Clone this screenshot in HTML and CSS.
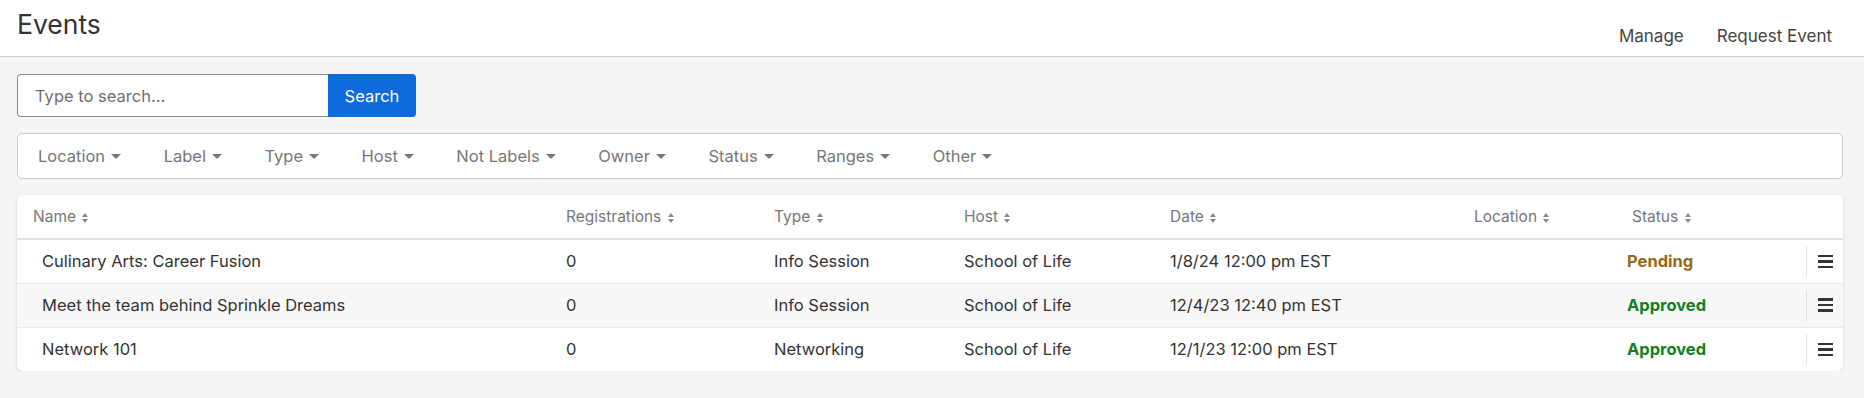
FILE: index.html
```html
<!DOCTYPE html>
<html lang="en">
<head>
  <meta charset="UTF-8" />
  <title>Events</title>
  <link rel="stylesheet" href="styles.css">
</head>
<body>

  <!-- Top bar -->
  <header class="topbar">
    <h1>Events</h1>
    <nav class="topnav">
      <a href="#">Manage</a>
      <a href="#">Request Event</a>
    </nav>
  </header>

  <main class="page">
    <!-- Search -->
    <form class="search">
      <input type="text" placeholder="Type to search..." />
      <button type="submit">Search</button>
    </form>

    <!-- Filters -->
    <div class="filters">
      <span class="filter">Location <i class="caret"></i></span>
      <span class="filter">Label <i class="caret"></i></span>
      <span class="filter">Type <i class="caret"></i></span>
      <span class="filter">Host <i class="caret"></i></span>
      <span class="filter">Not Labels <i class="caret"></i></span>
      <span class="filter">Owner <i class="caret"></i></span>
      <span class="filter">Status <i class="caret"></i></span>
      <span class="filter">Ranges <i class="caret"></i></span>
      <span class="filter">Other <i class="caret"></i></span>
    </div>

    <!-- Events table -->
    <div class="card">
      <table class="events">
        <colgroup>
          <col style="width: 533px">
          <col style="width: 208px">
          <col style="width: 190px">
          <col style="width: 206px">
          <col style="width: 304px">
          <col style="width: 158px">
          <col style="width: 190px">
          <col>
        </colgroup>
        <thead>
          <tr>
            <th>Name <span class="sort"></span></th>
            <th>Registrations <span class="sort"></span></th>
            <th>Type <span class="sort"></span></th>
            <th>Host <span class="sort"></span></th>
            <th>Date <span class="sort"></span></th>
            <th>Location <span class="sort"></span></th>
            <th>Status <span class="sort"></span></th>
            <th></th>
          </tr>
        </thead>
        <tbody>
          <tr>
            <td class="name">Culinary Arts: Career Fusion</td>
            <td>0</td>
            <td>Info Session</td>
            <td>School of Life</td>
            <td>1/8/24 12:00 pm EST</td>
            <td></td>
            <td class="status pending">Pending</td>
            <td class="actions"><span class="menu"><i></i><i></i><i></i></span></td>
          </tr>
          <tr>
            <td class="name">Meet the team behind Sprinkle Dreams</td>
            <td>0</td>
            <td>Info Session</td>
            <td>School of Life</td>
            <td>12/4/23 12:40 pm EST</td>
            <td></td>
            <td class="status approved">Approved</td>
            <td class="actions"><span class="menu"><i></i><i></i><i></i></span></td>
          </tr>
          <tr>
            <td class="name">Network 101</td>
            <td>0</td>
            <td>Networking</td>
            <td>School of Life</td>
            <td>12/1/23 12:00 pm EST</td>
            <td></td>
            <td class="status approved">Approved</td>
            <td class="actions"><span class="menu"><i></i><i></i><i></i></span></td>
          </tr>
        </tbody>
      </table>
    </div>
  </main>

</body>
</html>
```

FILE: styles.css
```css
* {
  box-sizing: border-box;
}

body {
  margin: 0;
  font-family: Inter, 'Liberation Sans', sans-serif;
  font-size: 16.5px;
  color: #333;
  background: #f5f5f5;
}

/* Top bar */
.topbar {
  display: flex;
  justify-content: space-between;
  height: 57px;
  padding: 0 17px;
  background: white;
  border-bottom: 1px solid #c3ccd7;
}

.topbar h1 {
  margin: 0;
  padding-top: 8px;
  font-size: 26.5px;
  font-weight: 400;
  color: #333;
}

.topnav {
  display: flex;
  align-self: flex-end;
  padding-bottom: 10px;
}

.topnav a {
  padding: 0 15px 0 18px;
  color: #444;
  text-decoration: none;
  font-size: 17px;
}

.page {
  padding: 17px 21px 0 17px;
}

/* Search */
.search {
  display: flex;
  margin: 0 0 16px;
}

.search input {
  width: 311px;
  height: 43px;
  padding: 0 17px;
  border: 1px solid #8a8a8a;
  border-right: none;
  border-radius: 4px 0 0 4px;
  font-family: inherit;
  font-size: 16.5px;
  color: #333;
}

.search input::placeholder {
  color: #6f6f6f;
}

.search button {
  width: 88px;
  height: 43px;
  border: none;
  border-radius: 0 4px 4px 0;
  background: #0d6bdc;
  color: white;
  font-family: inherit;
  font-size: 16.5px;
}

/* Filters */
.filters {
  display: flex;
  align-items: center;
  height: 46px;
  margin-bottom: 16px;
  background: white;
  border: 1px solid #c9c9c9;
  border-radius: 5px;
}

.filter {
  display: flex;
  align-items: center;
  padding: 0 21px 0 21.5px;
  color: #777;
  font-size: 16.5px;
}

.filter:first-child {
  padding-left: 20px;
}

.caret {
  display: inline-block;
  margin-left: 6px;
  border-top: 5px solid #777;
  border-left: 5px solid transparent;
  border-right: 5px solid transparent;
}

/* Table card */
.card {
  background: white;
  border-radius: 6px;
  box-shadow: 0 1px 3px rgba(0, 0, 0, 0.14);
  overflow: hidden;
}

.events {
  width: 100%;
  border-collapse: collapse;
  table-layout: fixed;
}

.events th {
  height: 44px;
  padding: 0 16px;
  text-align: left;
  font-weight: 400;
  font-size: 15.5px;
  color: #777;
  border-bottom: 2px solid #e2e2e2;
}

.sort {
  display: inline-block;
  position: relative;
  width: 7px;
  height: 10px;
  margin-left: 2px;
  vertical-align: -1px;
}

.sort::before,
.sort::after {
  content: "";
  position: absolute;
  left: 0;
  border-left: 3.5px solid transparent;
  border-right: 3.5px solid transparent;
}

.sort::before {
  top: 0;
  border-bottom: 4px solid #888;
}

.sort::after {
  bottom: 0;
  border-top: 4px solid #888;
}

.events td {
  height: 44px;
  padding: 0 16px;
  color: #333;
  border-top: 1px solid #e8e8e8;
  white-space: nowrap;
}

.events tbody tr:first-child td {
  border-top: none;
}

.events tbody tr:nth-child(even) {
  background: #f8f8f8;
}

.events td.name {
  padding-left: 25px;
}

.events td.status {
  padding-left: 11px;
  font-weight: 700;
}

.events td.pending {
  color: #936a14;
}

.events td.approved {
  color: #10801e;
}

.events td.actions {
  padding: 0;
}

.menu {
  display: flex;
  flex-direction: column;
  justify-content: center;
  gap: 3px;
  height: 31px;
  padding-left: 11px;
  border-left: 1px solid #e2e2e2;
}

.menu i {
  display: block;
  width: 15px;
  height: 2.5px;
  background: #333;
}
```
